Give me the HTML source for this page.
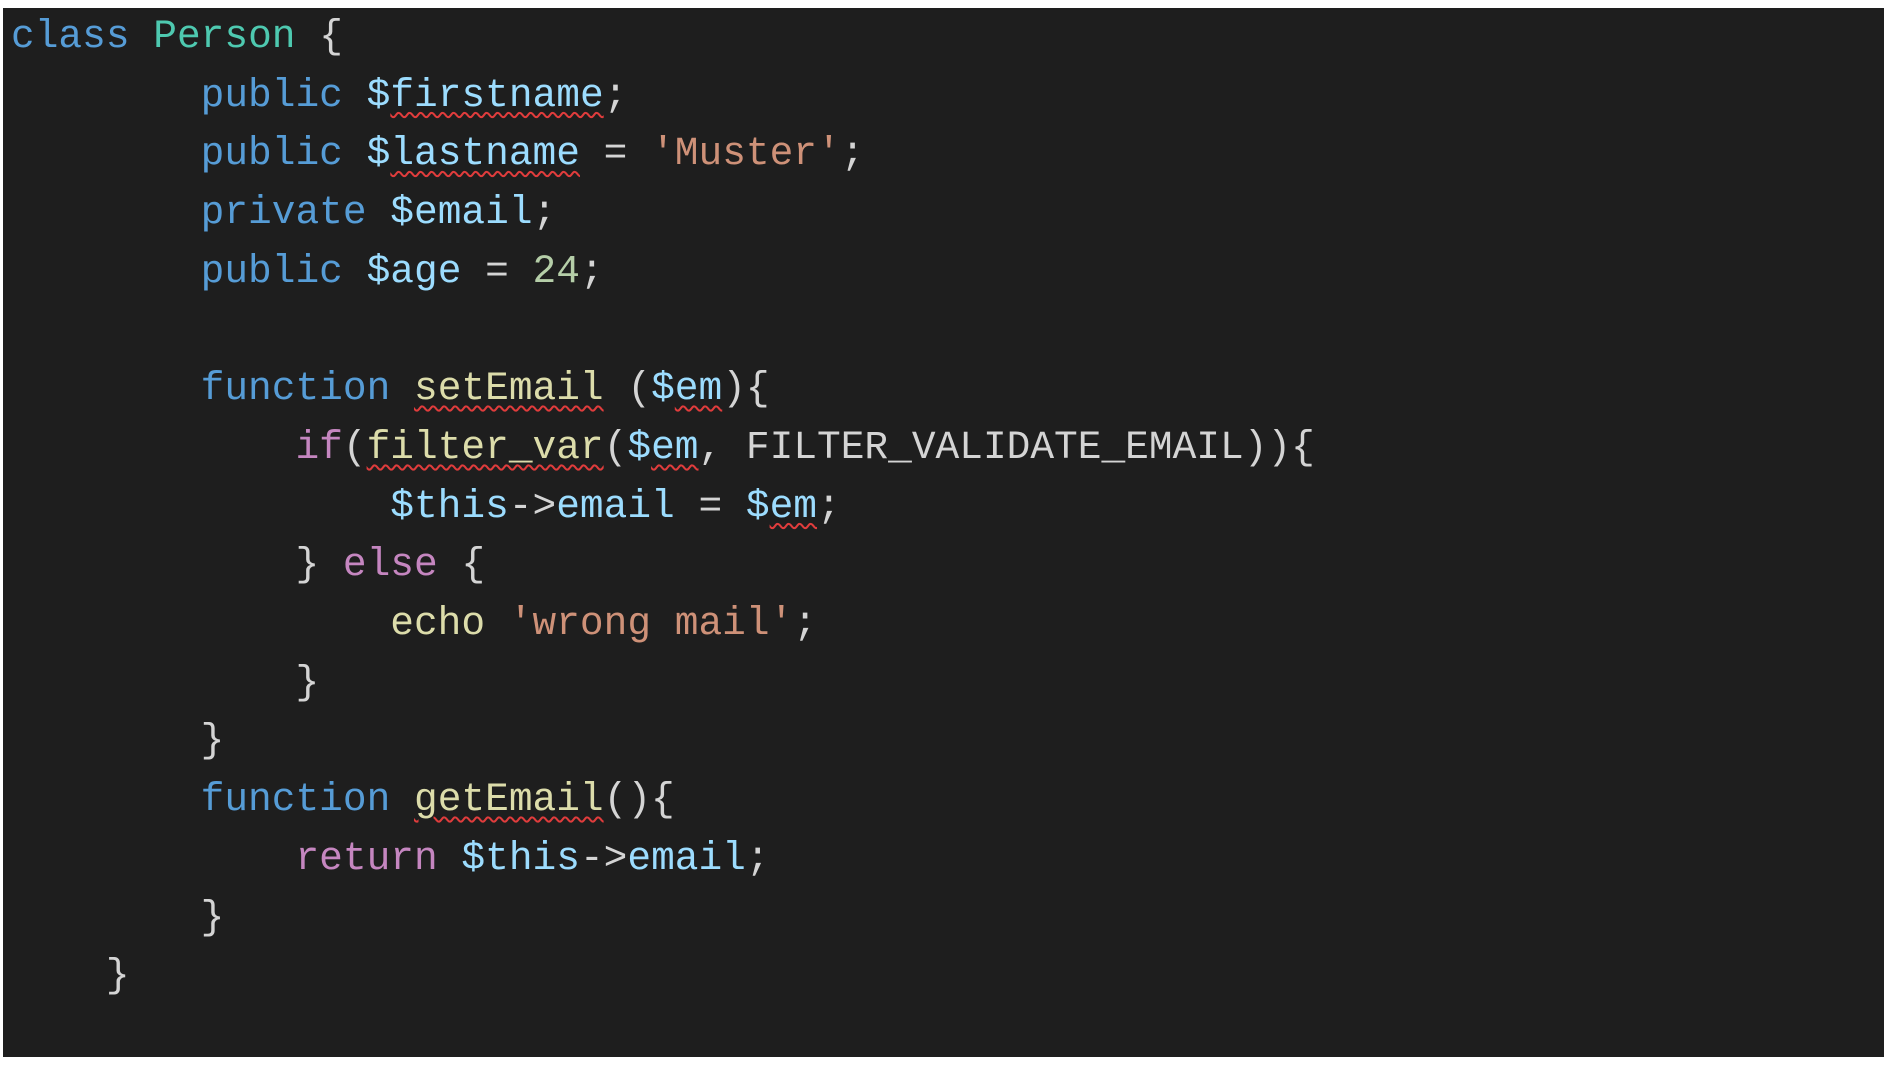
<!DOCTYPE html>
<html><head><meta charset="utf-8"><style>
html,body{margin:0;padding:0;background:#fff;width:1890px;height:1067px;overflow:hidden}
.box{position:absolute;left:3px;top:8px;width:1881px;height:1049px;background:#1e1e1e}
pre{position:absolute;left:11px;top:8px;margin:0;font-family:"Liberation Mono",monospace;font-size:39.5px;line-height:58.7px;color:#d4d4d4}
.k{color:#569cd6}.c{color:#4ec9b0}.v{color:#9cdcfe}.s{color:#ce9178}.n{color:#b5cea8}.f{color:#dcdcaa}.p{color:#c586c0}
.w{text-decoration:underline wavy #e03c3c;text-decoration-thickness:1.5px;text-underline-offset:6px}
</style></head><body><div class="box"></div>
<pre><span class="k">class</span> <span class="c">Person</span> {
        <span class="k">public</span> <span class="v">$<span class="w">firstname</span></span>;
        <span class="k">public</span> <span class="v">$<span class="w">lastname</span></span> = <span class="s">'Muster'</span>;
        <span class="k">private</span> <span class="v">$email</span>;
        <span class="k">public</span> <span class="v">$age</span> = <span class="n">24</span>;

        <span class="k">function</span> <span class="f w">setEmail</span> (<span class="v">$<span class="w">em</span></span>){
            <span class="p">if</span>(<span class="f w">filter_var</span>(<span class="v">$<span class="w">em</span></span>, FILTER_VALIDATE_EMAIL)){
                <span class="v">$this</span>-&gt;<span class="v">email</span> = <span class="v">$<span class="w">em</span></span>;
            } <span class="p">else</span> {
                <span class="f">echo</span> <span class="s">'wrong mail'</span>;
            }
        }
        <span class="k">function</span> <span class="f w">getEmail</span>(){
            <span class="p">return</span> <span class="v">$this</span>-&gt;<span class="v">email</span>;
        }
    }</pre>
</body></html>
